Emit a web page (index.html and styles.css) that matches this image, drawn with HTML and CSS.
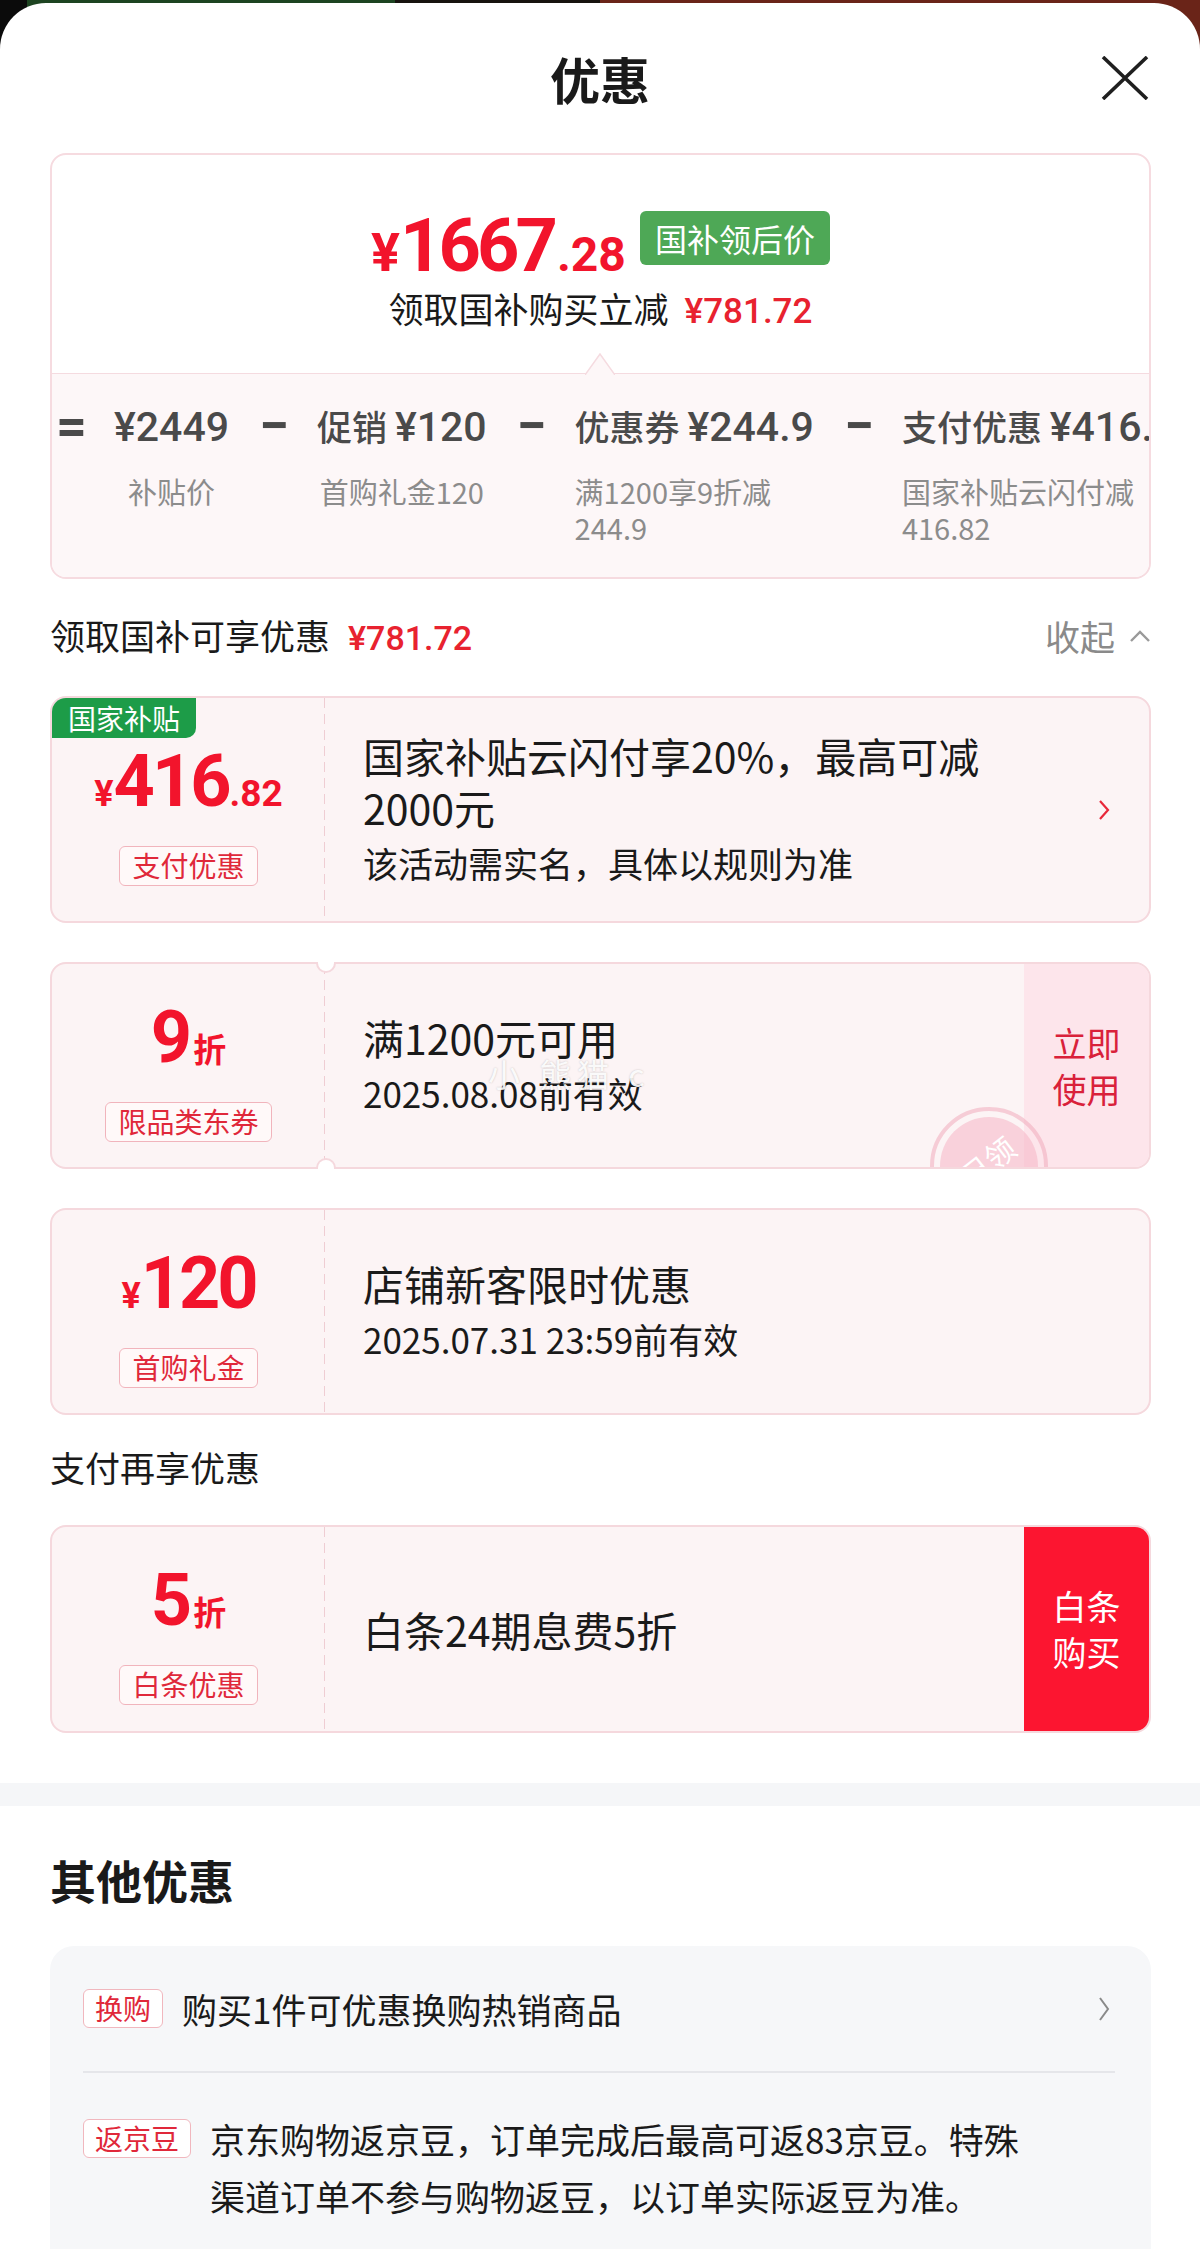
FILE: index.html
```html
<!DOCTYPE html>
<html lang="zh-CN">
<head>
<meta charset="utf-8">
<title>优惠</title>
<link rel="stylesheet" href="styles.css">
</head>
<body>
<div class="sheet">
  <header class="sheet-head">
    <span></span>
    <h1 class="sheet-title">优惠</h1>
    <button class="close" aria-label="关闭">
      <svg viewBox="0 0 48 44" width="48" height="44"><path d="M2 1 L46 43 M46 1 L2 43" stroke="#1f1f1f" stroke-width="3.6" fill="none"/></svg>
    </button>
  </header>

  <div class="sheet-body">
    <section class="summary">
      <div class="summary-top">
        <div class="price-row">
          <span class="price"><span class="price-yen">¥</span><span class="price-int">1667</span><span class="price-dec">.28</span></span>
          <span class="badge-green">国补领后价</span>
        </div>
        <div class="save-line">领取国补购买立减<span class="save-amt">¥781.72</span></div>
      </div>
      <div class="breakdown">
        <svg class="pointer" width="30" height="22" viewBox="0 0 30 22"><path d="M0 22 L15 1 L30 22" fill="#fdf7f8" stroke="#f5dbe0" stroke-width="1.5"/></svg>
        <div class="bd-row">
          <span class="bd-op">=</span>
          <div class="bd-col"><div class="bd-main"><span class="bd-amt">¥2449</span></div><div class="bd-sub">补贴价</div></div>
          <span class="bd-op">−</span>
          <div class="bd-col"><div class="bd-main">促销 <span class="bd-amt">¥120</span></div><div class="bd-sub">首购礼金120</div></div>
          <span class="bd-op">−</span>
          <div class="bd-col bd-col--left"><div class="bd-main">优惠券 <span class="bd-amt">¥244.9</span></div><div class="bd-sub">满1200享9折减244.9</div></div>
          <span class="bd-op">−</span>
          <div class="bd-col bd-col--left"><div class="bd-main">支付优惠 <span class="bd-amt">¥416.82</span></div><div class="bd-sub">国家补贴云闪付减416.82</div></div>
        </div>
      </div>
    </section>

    <div class="sec-head">
      <div class="sec-title">领取国补可享优惠<span class="sec-amt">¥781.72</span></div>
      <div class="fold">收起<svg width="22" height="14" viewBox="0 0 22 14"><path d="M2 12 L11 3 L20 12" stroke="#9a9a9a" stroke-width="2.4" fill="none"/></svg></div>
    </div>

    <div class="coupon coupon--tall">
      <div class="coupon-inner">
        <span class="gov-tag">国家补贴</span>
        <div class="c-left">
          <div class="c-amount"><span class="c-yen">¥</span><span class="c-num">416</span><span class="c-dec">.82</span></div>
          <span class="c-tag">支付优惠</span>
        </div>
        <div class="c-body">
          <div class="c-text">
            <div class="c-title">国家补贴云闪付享20%，最高可减2000元</div>
            <div class="c-sub">该活动需实名，具体以规则为准</div>
          </div>
          <svg class="c-arrow" width="14" height="22" viewBox="0 0 14 22"><path d="M3 2 L11 11 L3 20" stroke="#e8283a" stroke-width="2.2" fill="none"/></svg>
        </div>
      </div>
    </div>

    <div class="coupon">
      <span class="notch notch--top"></span>
      <span class="notch notch--bottom"></span>
      <div class="coupon-inner">
        <div class="c-left">
          <div class="c-amount"><span class="c-num">9</span><span class="c-unit">折</span></div>
          <span class="c-tag">限品类东券</span>
        </div>
        <div class="c-body">
          <div class="c-text">
            <div class="c-title">满1200元可用</div>
            <div class="c-sub">2025.08.08前有效</div>
          </div>
        </div>
        <div class="c-action c-action--soft">立即<br>使用</div>
        <span class="stamp"><span class="stamp-text">已领</span></span>
        <span class="watermark">小 熊猫 c</span>
      </div>
    </div>

    <div class="coupon coupon--flush">
      <div class="coupon-inner">
        <div class="c-left">
          <div class="c-amount"><span class="c-yen">¥</span><span class="c-num">120</span></div>
          <span class="c-tag">首购礼金</span>
        </div>
        <div class="c-body">
          <div class="c-text">
            <div class="c-title">店铺新客限时优惠</div>
            <div class="c-sub">2025.07.31 23:59前有效</div>
          </div>
        </div>
      </div>
    </div>

    <div class="sec-head sec-head--pay">
      <div class="sec-title">支付再享优惠</div>
    </div>

    <div class="coupon coupon--last">
      <div class="coupon-inner">
        <div class="c-left">
          <div class="c-amount"><span class="c-num">5</span><span class="c-unit">折</span></div>
          <span class="c-tag">白条优惠</span>
        </div>
        <div class="c-body">
          <div class="c-text">
            <div class="c-title">白条24期息费5折</div>
          </div>
        </div>
        <div class="c-action c-action--solid">白条<br>购买</div>
      </div>
    </div>
  </div>

  <div class="band"></div>

  <section class="other">
    <h2 class="other-title">其他优惠</h2>
    <div class="other-card">
      <div class="o-row o-row--first">
        <span class="o-tag">换购</span>
        <span class="o-text">购买1件可优惠换购热销商品</span>
        <svg class="o-arrow" width="14" height="26" viewBox="0 0 14 26"><path d="M3 2 L11 13 L3 24" stroke="#8a8a8a" stroke-width="2" fill="none"/></svg>
      </div>
      <div class="o-row o-row--second">
        <span class="o-tag">返京豆</span>
        <span class="o-text o-text--wrap">京东购物返京豆，订单完成后最高可返83京豆。特殊渠道订单不参与购物返豆，以订单实际返豆为准。</span>
      </div>
    </div>
  </section>
</div>
</body>
</html>
```

FILE: styles.css
```css
* {
  box-sizing: border-box;
  margin: 0;
  padding: 0;
}

html, body {
  width: 1200px;
}

body {
  font-family: "Noto Sans CJK SC", "Noto Sans", sans-serif;
  color: #1a1a1a;
  background: linear-gradient(90deg, #0b0b0b 0 27px, #1d4421 27px 395px, #17130f 395px 600px, #6a2418 600px 1200px);
  min-height: 2249px;
  overflow: hidden;
}

.sheet {
  margin-top: 3px;
  background: #fff;
  border-radius: 46px 46px 0 0;
  min-height: 2246px;
}

/* header */
.sheet-head {
  height: 150px;
  display: grid;
  grid-template-columns: 1fr auto 1fr;
  align-items: center;
}

.sheet-title {
  font-size: 50px;
  font-weight: 700;
  line-height: 60px;
  color: #1a1a1a;
}

.close {
  justify-self: end;
  margin-right: 51px;
  border: 0;
  background: none;
  display: flex;
}

.sheet-body {
  padding: 0 49px 0 50px;
}

/* summary card */
.summary {
  border: 2px solid #f6dbe0;
  border-radius: 16px;
  overflow: hidden;
}

.summary-top {
  height: 218px;
  padding-top: 55px;
  display: flex;
  flex-direction: column;
  align-items: center;
}

.price-row {
  height: 72px;
  display: flex;
  align-items: flex-start;
  justify-content: center;
  gap: 14px;
}

.price {
  font-family: "Roboto", "Noto Sans CJK SC", sans-serif;
  font-weight: 700;
  color: #f2142c;
  line-height: 72px;
  white-space: nowrap;
}

.price-yen {
  font-size: 54px;
}

.price-int {
  font-size: 74px;
  letter-spacing: -4px;
}

.price-dec {
  font-size: 48px;
  margin-left: 3px;
}

.badge-green {
  margin-top: 1px;
  height: 54px;
  line-height: 54px;
  padding: 0 15px;
  border-radius: 6px;
  background: #4ea856;
  color: #fff;
  font-size: 32px;
}

.save-line {
  margin-top: 6px;
  font-size: 35px;
  line-height: 40px;
  color: #1a1a1a;
}

.save-amt {
  margin-left: 16px;
  font-family: "Roboto", "Noto Sans CJK SC", sans-serif;
  font-weight: 500;
  color: #e8222f;
}

.breakdown {
  position: relative;
  background: #fdf7f8;
  border-top: 1.5px solid #f5dbe0;
  padding: 30px 0 32px 4px;
}

.pointer {
  position: absolute;
  top: -21px;
  left: calc(50% - 16px);
}

.bd-row {
  display: flex;
  gap: 30px;
  align-items: flex-start;
}

.bd-op {
  flex: none;
  width: 28px;
  text-align: center;
  font-family: "Roboto", sans-serif;
  font-weight: 700;
  font-size: 54px;
  line-height: 44px;
  color: #4a4a4a;
}

.bd-col {
  flex: none;
  display: flex;
  flex-direction: column;
  align-items: center;
}

.bd-main {
  font-size: 35px;
  font-weight: 500;
  line-height: 44px;
  color: #4a4a4a;
  white-space: nowrap;
}

.bd-amt {
  font-family: "Roboto", "Noto Sans CJK SC", sans-serif;
  font-size: 41px;
  font-weight: 500;
}

.bd-sub {
  margin-top: 24px;
  font-size: 29px;
  line-height: 36px;
  color: #8c8c8c;
  text-align: center;
  white-space: nowrap;
}

.bd-col--left .bd-sub {
  width: 0;
  min-width: 100%;
  text-align: left;
  white-space: normal;
}

/* section heads */
.sec-head {
  height: 48px;
  margin: 33px 0 36px;
  display: flex;
  align-items: center;
  justify-content: space-between;
  font-size: 35px;
  line-height: 48px;
}

.sec-head--pay {
  margin: 0 0 34px;
}

.sec-amt {
  margin-left: 18px;
  font-family: "Roboto", "Noto Sans CJK SC", sans-serif;
  font-size: 34px;
  font-weight: 500;
  color: #e8222f;
}

.fold {
  display: flex;
  align-items: center;
  gap: 14px;
  color: #8a8a8a;
}

/* coupons */
.coupon {
  position: relative;
  height: 207px;
  margin-bottom: 39px;
  border: 2px solid #f5d8dd;
  border-radius: 16px;
  background: #fcf4f5;
}

.coupon--tall {
  height: 227px;
}

.coupon--flush {
  margin-bottom: 28px;
}

.coupon--last {
  margin-bottom: 0;
  height: 208px;
}

.coupon-inner {
  position: relative;
  height: 100%;
  display: flex;
  border-radius: 14px;
  overflow: hidden;
}

.notch {
  position: absolute;
  left: 264px;
  width: 20px;
  height: 11px;
  background: #fff;
  border: 2px solid #f5d8dd;
  z-index: 2;
}

.notch--top {
  top: -2px;
  border-top: 0;
  border-radius: 0 0 11px 11px;
}

.notch--bottom {
  bottom: -2px;
  border-bottom: 0;
  border-radius: 11px 11px 0 0;
}

.gov-tag {
  position: absolute;
  top: 0;
  left: 0;
  width: 144px;
  height: 40px;
  line-height: 40px;
  text-align: center;
  background: #1d9c48;
  color: #fff;
  font-size: 28px;
  border-radius: 0 0 10px 0;
}

.c-left {
  flex: none;
  width: 273px;
  padding-top: 14px;
  display: flex;
  flex-direction: column;
  align-items: center;
  justify-content: center;
  background-image: linear-gradient(to bottom, #efcdd3 0 10px, transparent 10px 16px);
  background-size: 1.5px 16px;
  background-repeat: repeat-y;
  background-position: right top;
}

.c-amount {
  font-family: "Roboto", "Noto Sans CJK SC", sans-serif;
  font-weight: 700;
  color: #f2142c;
  line-height: 68px;
  white-space: nowrap;
}

.c-yen {
  font-size: 36px;
}

.c-num {
  font-size: 72px;
  letter-spacing: -3px;
}

.c-dec {
  font-size: 37px;
  margin-left: 1px;
}

.c-unit {
  margin-left: 4px;
  font-family: "Noto Sans CJK SC", sans-serif;
  font-size: 33px;
}

.c-tag {
  margin-top: 11px;
  height: 40px;
  line-height: 37px;
  padding: 0 12px;
  border: 1.5px solid #f1b4bc;
  border-radius: 6px;
  background: #fff9f9;
  color: #e0283a;
  font-size: 28px;
}

.c-body {
  flex: 1;
  display: flex;
  align-items: center;
  padding-left: 38px;
}

.c-text {
  max-width: 660px;
}

.c-title {
  font-size: 41px;
  line-height: 52px;
  color: #1a1a1a;
}

.c-sub {
  margin-top: 3px;
  font-size: 35px;
  line-height: 54px;
  color: #1a1a1a;
}

.c-arrow {
  margin-left: auto;
  margin-right: 38px;
  flex: none;
}

.c-action {
  flex: none;
  width: 125px;
  display: flex;
  align-items: center;
  justify-content: center;
  text-align: center;
  font-size: 34px;
  line-height: 46px;
}

.c-action--soft {
  background: #fde5eb;
  color: #d9213a;
}

.c-action--solid {
  background: #fc1530;
  color: #fff;
}

.stamp {
  position: absolute;
  left: 878px;
  top: 143px;
  width: 118px;
  height: 118px;
  border-radius: 50%;
  border: 4px solid rgba(240, 172, 188, 0.55);
  display: flex;
  align-items: center;
  justify-content: center;
}

.stamp::before {
  content: "";
  position: absolute;
  inset: 6px;
  border-radius: 50%;
  background: rgba(246, 180, 196, 0.55);
}

.stamp-text {
  position: relative;
  margin-top: -10px;
  margin-left: -4px;
  transform: rotate(-38deg);
  color: #fff;
  font-size: 30px;
}

.watermark {
  position: absolute;
  left: 436px;
  top: 86px;
  font-size: 32px;
  letter-spacing: 6px;
  color: rgba(255, 255, 255, 0.92);
  text-shadow: 0 0 2px rgba(0, 0, 0, 0.22);
  white-space: nowrap;
}

/* band & other */
.band {
  height: 23px;
  margin-top: 50px;
  background: #f5f6f8;
}

.other {
  padding: 43px 49px 0 50px;
}

.other-title {
  font-size: 46px;
  font-weight: 700;
  line-height: 60px;
  color: #1a1a1a;
}

.other-card {
  margin-top: 37px;
  background: #f6f7f9;
  border-radius: 24px;
  padding: 0 36px 60px 33px;
}

.o-row {
  display: flex;
}

.o-row--first {
  height: 127px;
  align-items: center;
  border-bottom: 2px solid #e5e6ea;
}

.o-row--second {
  padding-top: 37px;
  align-items: flex-start;
}

.o-tag {
  flex: none;
  height: 39px;
  line-height: 36px;
  padding: 0 11px;
  border: 1.5px solid #f1b7be;
  border-radius: 6px;
  background: #fff;
  color: #e0283a;
  font-size: 28px;
}

.o-row--second .o-tag {
  margin-top: 9px;
}

.o-text {
  margin-left: 19px;
  font-size: 35px;
  line-height: 57px;
  color: #1a1a1a;
}

.o-text--wrap {
  max-width: 830px;
}

.o-arrow {
  margin-left: auto;
  margin-right: 4px;
}
```
